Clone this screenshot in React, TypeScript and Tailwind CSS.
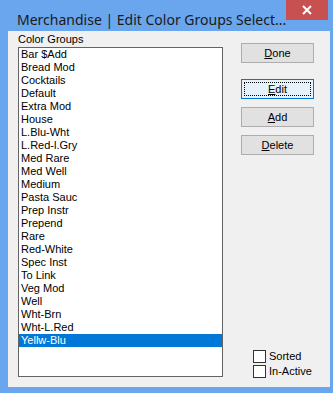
import React, { useState } from 'react';

const groups = [
  'Bar $Add', 'Bread Mod', 'Cocktails', 'Default', 'Extra Mod', 'House', 'L.Blu-Wht', 'L.Red-l.Gry',
  'Med Rare', 'Med Well', 'Medium', 'Pasta Sauc', 'Prep Instr', 'Prepend', 'Rare', 'Red-White',
  'Spec Inst', 'To Link', 'Veg Mod', 'Well', 'Wht-Brn', 'Wht-L.Red', 'Yellw-Blu',
];

function Btn({ label, focused }: { label: string; focused?: boolean }) {
  return (
    <button
      className={
        focused
          ? 'w-[73px] h-[20px] p-[2px] border border-[#0078d7] bg-[#e5f1fb] text-black'
          : 'w-[73px] h-[20px] p-[2px] border border-[#adadad] bg-[#e1e1e1] text-black'
      }
    >
      <span
        className={
          focused
            ? 'flex h-full w-full items-center justify-center border border-dotted border-black leading-none'
            : 'flex h-full w-full items-center justify-center border border-transparent leading-none'
        }
      >
        <u>{label[0]}</u>
        {label.slice(1)}
      </span>
    </button>
  );
}

function Check({ label }: { label: string }) {
  return (
    <div className="flex items-center gap-[3px] h-[15px]">
      <span className="w-[13px] h-[13px] border border-[#333] bg-white" />
      <span>{label}</span>
    </div>
  );
}

export default function App() {
  const [selected, setSelected] = useState('Yellw-Blu');

  return (
    <div
      className="w-[333px] h-[393px] bg-[#6aa6ee] flex flex-col overflow-hidden text-[11px] text-black"
      style={{ fontFamily: '"Liberation Sans", Arial, sans-serif' }}
    >
      {/* title bar */}
      <div className="h-[31px] flex items-start shrink-0">
        <div
          className="pl-[17px] pt-[10px] text-[14px] leading-[19px] text-[#1a1a1a] flex-1 whitespace-nowrap"
          style={{ fontFamily: '"Noto Sans", "Open Sans", sans-serif' }}
        >
          Merchandise | Edit Color Groups Select...
        </div>
        <div className="w-[44px] h-[20px] mr-[5px] bg-[#c75050] flex items-center justify-center">
          <svg width="10" height="10" viewBox="0 0 10 10">
            <path d="M1 1 L9 9 M9 1 L1 9" stroke="white" strokeWidth="2" />
          </svg>
        </div>
      </div>

      {/* client */}
      <div className="ml-[8px] mr-[3px] mb-[6px] flex-1 bg-[#f0f0f0] flex">
        <div className="pl-[10px] pt-[2px] flex flex-col">
          <div className="h-[14px] leading-[13px]">Color Groups</div>
          <div className="w-[205px] h-[330px] border border-[#646464] bg-white">
            {groups.map(g => (
              <div
                key={g}
                onClick={() => setSelected(g)}
                className={
                  g === selected
                    ? 'h-[13px] leading-[13px] pl-[2px] bg-[#0078d7] text-white'
                    : 'h-[13px] leading-[13px] pl-[2px]'
                }
              >
                {g}
              </div>
            ))}
          </div>
        </div>

        <div className="ml-[18px] pt-[12px] flex flex-col">
          <Btn label="Done" />
          <div className="mt-[16px] flex flex-col gap-[8px]">
            <Btn label="Edit" focused />
            <Btn label="Add" />
            <Btn label="Delete" />
          </div>
          <div className="mt-auto mb-[8px] ml-[12px] flex flex-col">
            <Check label="Sorted" />
            <Check label="In-Active" />
          </div>
        </div>
      </div>
    </div>
  );
}
